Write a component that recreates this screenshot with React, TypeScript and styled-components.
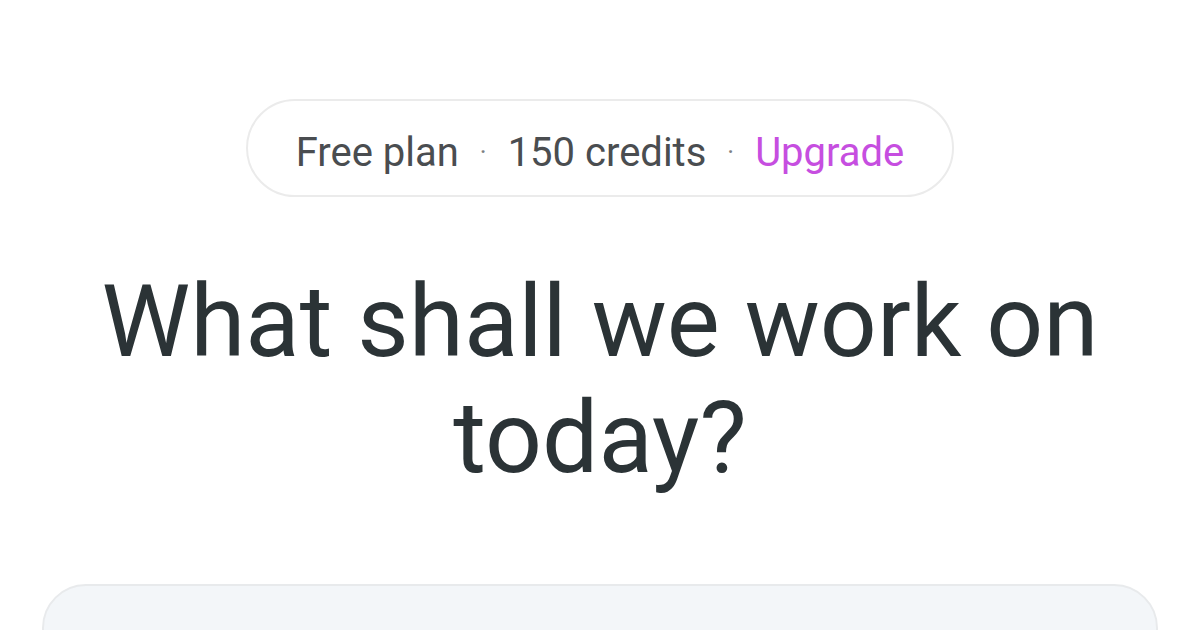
import React from "react";
import styled, { createGlobalStyle } from "styled-components";

const GlobalStyle = createGlobalStyle`
  * { box-sizing: border-box; }
  html, body { margin: 0; padding: 0; background: #ffffff; }
  body { font-family: Roboto, "Noto Sans", sans-serif; -webkit-font-smoothing: antialiased; }
`;

const Page = styled.main`
  display: flex;
  flex-direction: column;
  align-items: center;
  height: 630px;
  overflow: hidden;
  padding-top: 99px;

  & > * { flex-shrink: 0; }
`;

const PlanPill = styled.div`
  display: flex;
  align-items: center;
  gap: 21px;
  height: 98px;
  padding: 8px 48px 0;
  border: 2px solid #ebebeb;
  border-radius: 49px;
  font-size: 40px;
  color: #4a4d50;
`;

const Dot = styled.span`
  color: #7d8083;
  font-size: 26px;
`;

const UpgradeLink = styled.a`
  color: #c64ee0;
  text-decoration: none;
  cursor: pointer;
`;

const Heading = styled.h1`
  margin: 67px 0 0;
  max-width: 1040px;
  font-size: 100px;
  line-height: 116px;
  font-weight: 400;
  text-align: center;
  color: #2b3336;
`;

const Composer = styled.section`
  align-self: stretch;
  margin: 88px 42px 0;
  height: 200px;
  background: #f3f6f9;
  border: 2px solid #e8eaec;
  border-radius: 44px;
`;

export default function App() {
  return (
    <>
      <GlobalStyle />
      <Page>
        <PlanPill>
          <span>Free plan</span>
          <Dot>·</Dot>
          <span>150 credits</span>
          <Dot>·</Dot>
          <UpgradeLink>Upgrade</UpgradeLink>
        </PlanPill>
        <Heading>What shall we work on today?</Heading>
        <Composer />
      </Page>
    </>
  );
}
